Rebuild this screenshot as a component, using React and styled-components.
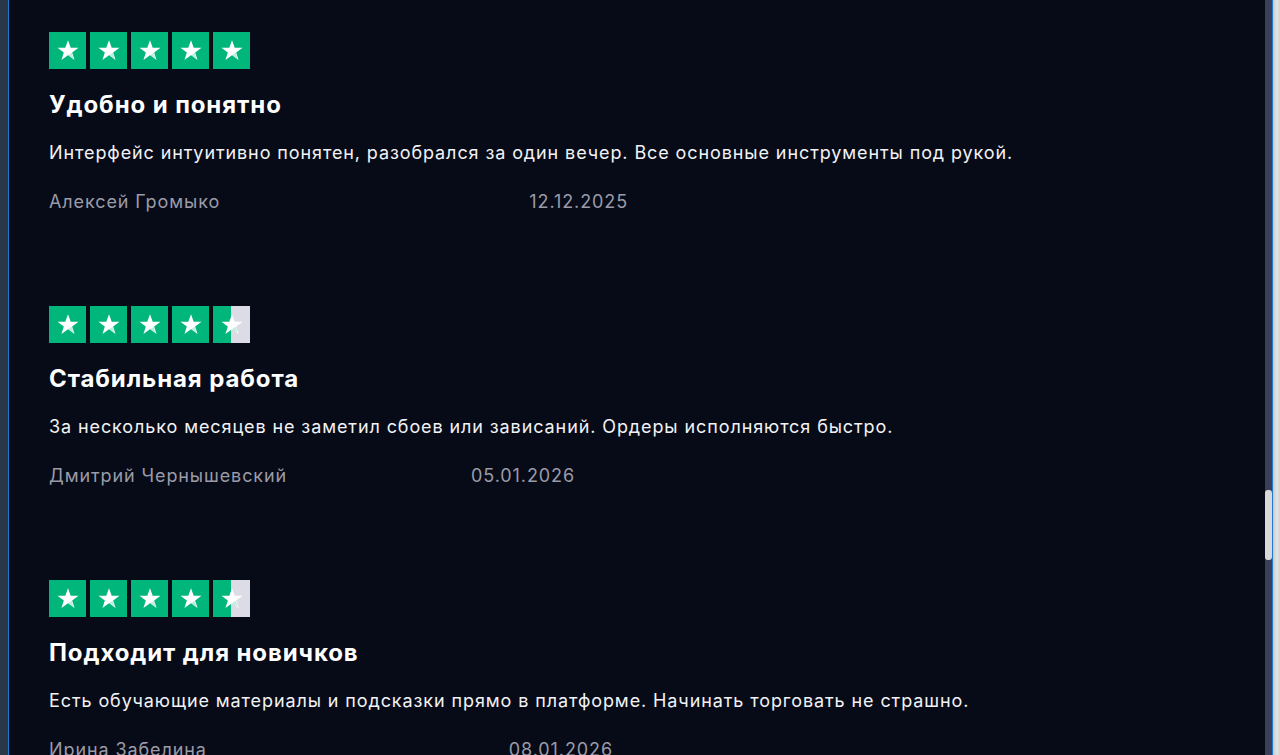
import React from 'react';
import styled, { createGlobalStyle } from 'styled-components';

const GlobalStyle = createGlobalStyle`
  html, body {
    margin: 0;
    padding: 0;
    height: 100%;
    overflow: hidden;
    background: #070b17;
  }
  body {
    font-family: Inter, "Noto Sans", "Liberation Sans", sans-serif;
  }
`;

const Frame = styled.div`
  display: flex;
  height: 755px;
  width: 1280px;
`;

const LeftGutter = styled.div`
  width: 8px;
  background: #2a3746;
`;

const Viewport = styled.div`
  flex: 1;
  display: flex;
  background: #070b17;
  border-left: 1px solid #1f78d1;
  border-right: 1px solid #1f78d1;
  overflow: hidden;
`;

const Content = styled.div`
  flex: 1;
  padding: 32px 0 0 40px;
  display: flex;
  flex-direction: column;
  overflow: hidden;
`;

const Track = styled.div`
  width: 7px;
  background: #3b3f58;
  padding-top: 490px;
`;

const Thumb = styled.div`
  height: 70px;
  border-radius: 3px;
  background: #d9d9dc;
`;

const RightGutter = styled.div`
  width: 7px;
  background: linear-gradient(90deg, #c9c9c9 0%, #e4e4e4 60%, #d0d0d0 100%);
`;

const Review = styled.article`
  height: 274px;
  flex-shrink: 0;
  display: flex;
  flex-direction: column;
`;

const Stars = styled.div`
  display: flex;
  gap: 4px;
`;

const StarBox = styled.div`
  width: 37px;
  height: 37px;
  display: flex;
  align-items: center;
  justify-content: center;
  background: ${(p) =>
    `linear-gradient(90deg, #00b67a 0%, #00b67a ${p.$fill}%, #dcdce6 ${p.$fill}%, #dcdce6 100%)`};
`;

const Title = styled.h3`
  margin: 21px 0 0;
  font-size: 24px;
  line-height: 30px;
  font-weight: 700;
  letter-spacing: 0.9px;
  color: #ffffff;
`;

const Body = styled.p`
  margin: 21px 0 0;
  font-size: 18px;
  line-height: 24px;
  letter-spacing: 0.9px;
  color: #f2f2f5;
`;

const Meta = styled.div`
  margin-top: 25px;
  display: flex;
  justify-content: space-between;
  width: ${(p) => p.$width}px;
  font-size: 18px;
  line-height: 24px;
  letter-spacing: 0.9px;
  color: #9b9ba8;
`;

function Star({ fill }) {
  return (
    <StarBox $fill={fill}>
      <svg width="26" height="25" viewBox="0 0 24 24">
        <path
          d="M12 2.2l2.6 7.1h7.5l-6.1 4.5 2.3 7.3L12 16.6l-6.3 4.5 2.3-7.3-6.1-4.5h7.5z"
          fill="#ffffff"
        />
        <path d="M15.7 14.2L12 16.6l5.2 3.4z" fill="#00b67a" opacity="0.25" />
      </svg>
    </StarBox>
  );
}

const reviews = [
  {
    rating: 5,
    title: 'Удобно и понятно',
    text: 'Интерфейс интуитивно понятен, разобрался за один вечер. Все основные инструменты под рукой.',
    author: 'Алексей Громыко',
    date: '12.12.2025',
    metaWidth: 579,
  },
  {
    rating: 4.5,
    title: 'Стабильная работа',
    text: 'За несколько месяцев не заметил сбоев или зависаний. Ордеры исполняются быстро.',
    author: 'Дмитрий Чернышевский',
    date: '05.01.2026',
    metaWidth: 526,
  },
  {
    rating: 4.5,
    title: 'Подходит для новичков',
    text: 'Есть обучающие материалы и подсказки прямо в платформе. Начинать торговать не страшно.',
    author: 'Ирина Забелина',
    date: '08.01.2026',
    metaWidth: 564,
  },
];

function ReviewCard({ review }) {
  const stars = [0, 1, 2, 3, 4].map((i) => {
    const v = Math.max(0, Math.min(1, review.rating - i));
    return v === 1 ? 100 : v === 0 ? 0 : 50;
  });
  return (
    <Review>
      <Stars>
        {stars.map((f, i) => (
          <Star key={i} fill={f} />
        ))}
      </Stars>
      <Title>{review.title}</Title>
      <Body>{review.text}</Body>
      <Meta $width={review.metaWidth}>
        <span>{review.author}</span>
        <span>{review.date}</span>
      </Meta>
    </Review>
  );
}

export default function App() {
  return (
    <>
      <GlobalStyle />
      <Frame>
        <LeftGutter />
        <Viewport>
          <Content>
            {reviews.map((r) => (
              <ReviewCard key={r.title} review={r} />
            ))}
          </Content>
          <Track>
            <Thumb />
          </Track>
        </Viewport>
        <RightGutter />
      </Frame>
    </>
  );
}
